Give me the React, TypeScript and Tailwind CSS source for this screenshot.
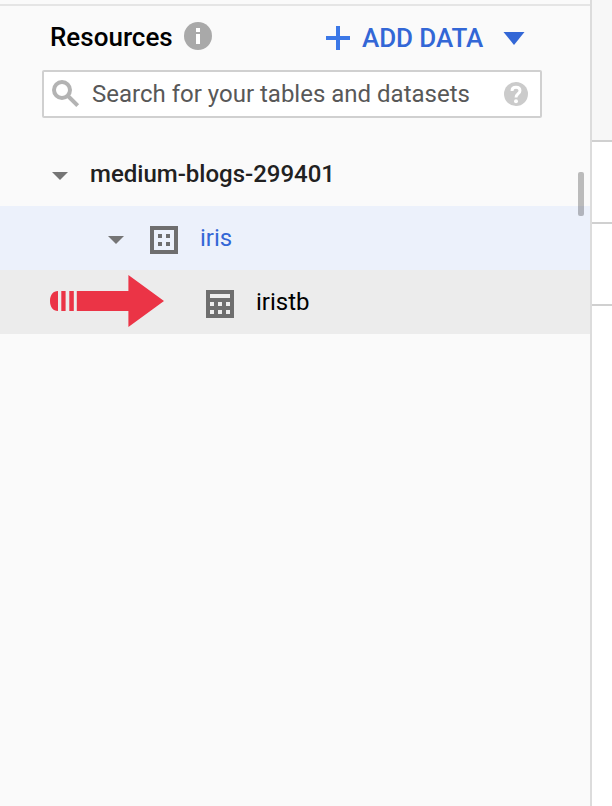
import React from "react";

function InfoIcon() {
  return (
    <svg className="ml-[12px] block shrink-0" width="28" height="28" viewBox="0 0 28 28">
      <circle cx="14" cy="14" r="14" fill="#a9a9a9" />
      <path d="M12 6h4v4h-4zM12 12h4v10h-4z" fill="#fff" />
    </svg>
  );
}

function SearchIcon() {
  return (
    <svg className="block shrink-0" width="28" height="28" viewBox="0 0 28 28" fill="none" stroke="#b3b3b3">
      <circle cx="10" cy="10" r="8" strokeWidth="4" />
      <path d="M15.5 15.5L25.7 25.7" strokeWidth="4" />
    </svg>
  );
}

function HelpIcon() {
  return (
    <svg className="block shrink-0" width="24" height="24" viewBox="0 0 24 24">
      <circle cx="12" cy="12" r="12" fill="#cbcbcb" />
      <path
        d="M8 8.9C8 6.8 9.6 5.3 12 5.3s4 1.4 4 3.5c0 2.9-4 3-4 6.7"
        fill="none"
        stroke="#fff"
        strokeWidth="2.9"
      />
      <circle cx="12" cy="19.3" r="2" fill="#fff" />
    </svg>
  );
}

function Caret() {
  return (
    <svg className="block shrink-0" width="16" height="8" viewBox="0 0 16 8">
      <path d="M0 0H16L8 8z" fill="#757575" />
    </svg>
  );
}

function DatasetIcon() {
  return (
    <svg className="block shrink-0" width="28" height="28" viewBox="0 0 28 28" fill="#6e6e6e">
      <path fillRule="evenodd" d="M0 0h28v28H0zM4 4v20h20V4z" />
      <path d="M8 8h4v4H8zM16 8h4v4h-4zM8 16h4v4H8zM16 16h4v4h-4z" />
    </svg>
  );
}

function TableIcon() {
  return (
    <svg className="block shrink-0" width="28" height="28" viewBox="0 0 28 28">
      <path d="M0 0h28v28H0z" fill="#6e6e6e" />
      <path
        d="M4 4h20v4H4zM4 12h4v4H4zM12 12h4v4h-4zM20 12h4v4h-4zM4 20h4v4H4zM12 20h4v4h-4zM20 20h4v4h-4z"
        fill="#ededed"
      />
    </svg>
  );
}

function Arrow() {
  return (
    <svg className="block shrink-0" width="114" height="52" viewBox="0 0 114 52" fill="#eb3446">
      <path d="M8 16v20C3 36 0 32 0 26S3 16 8 16zM11.3 16h4.3v20h-4.3zM19.3 16h4.5v20h-4.5zM26.8 16h51.6V0L114 26 78.4 52V36H26.8z" />
    </svg>
  );
}

export default function App() {
  return (
    <div className="flex h-[806px] w-[612px] overflow-hidden bg-white font-[Roboto,sans-serif] text-black">
      <aside className="relative w-[592px] shrink-0 border-r-2 border-[#dcdcdc] bg-[#fafafa]">
        <div className="mt-1 h-[2px] bg-[#e5e5e5]" />
        <header className="flex h-[64px] items-start pl-[50px] pt-4">
          <h1 className="w-[122px] whitespace-nowrap text-[26px] font-medium leading-[30px]">Resources</h1>
          <InfoIcon />
          <button className="ml-[114px] flex items-start text-[#3367d6]">
            <svg className="mt-1 block" width="24" height="24" viewBox="0 0 24 24">
              <path d="M10 0h4v10h10v4H14v10h-4V14H0v-4h10z" fill="#3b78e7" />
            </svg>
            <span className="ml-3 w-[122px] whitespace-nowrap text-left text-[26px] font-medium leading-[32px] tracking-[-0.08px]">ADD DATA</span>
            <svg className="ml-[19px] mt-[10px] block" width="22" height="13" viewBox="0 0 22 13">
              <path d="M.5 0h21L11 13z" fill="#3367d6" />
            </svg>
          </button>
        </header>
        <div className="ml-[42px] flex h-[48px] w-[500px] items-center rounded-[2px] border-2 border-[#d0d0d0] bg-white pl-2 pr-3">
          <SearchIcon />
          <span className="ml-3 flex-1 whitespace-nowrap text-[24px] leading-[44px] text-[#585858]">
            Search for your tables and datasets
          </span>
          <HelpIcon />
        </div>
        <nav className="mt-6 text-[24px]">
          <div className="flex h-16 items-center pl-[52px]">
            <div className="pt-[4px]"><Caret /></div>
            <span className="ml-[22px] whitespace-nowrap font-medium text-[#212121]">medium-blogs-299401</span>
          </div>
          <div className="flex h-16 items-center bg-[#ecf1fb] pl-[108px]">
            <div className="pt-[4px]"><Caret /></div>
            <div className="ml-[26px] pt-[4px]"><DatasetIcon /></div>
            <span className="ml-[22px] text-[#3367d6]">iris</span>
          </div>
          <div className="flex h-16 items-center bg-[#ececec] pl-[50px]">
            <div className="pb-[2px]"><Arrow /></div>
            <div className="ml-[42px] pt-[4px]"><TableIcon /></div>
            <span className="ml-[22px]">iristb</span>
          </div>
        </nav>
        <div className="absolute left-[578px] top-[172px] h-[44px] w-[6px] rounded-[2px] bg-black/25" />
      </aside>
      <div className="flex-1">
        <div className="h-[142px] border-b-2 border-[#d0d0d0] bg-[#f7f7f7]" />
        <div className="h-[82px] border-b-2 border-[#d0d0d0]" />
        <div className="h-[82px] border-b-2 border-[#d0d0d0]" />
      </div>
    </div>
  );
}
